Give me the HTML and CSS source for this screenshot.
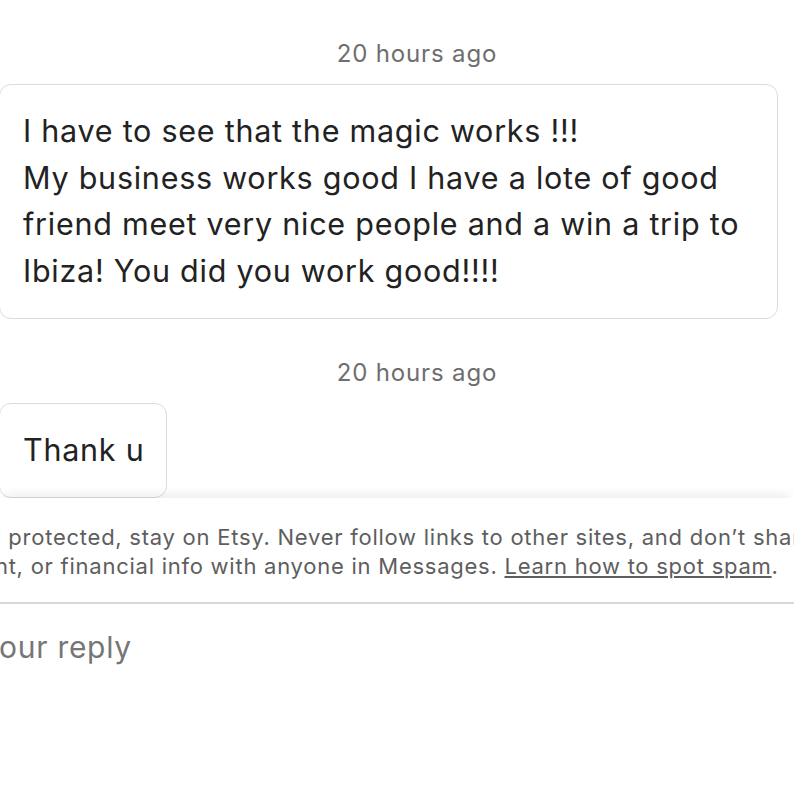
FILE: index.html
```html
<!DOCTYPE html>
<html>
<head>
<meta charset="utf-8">
<link rel="stylesheet" href="styles.css">
</head>
<body>
<div class="thread">
  <div class="stamp">20 hours ago</div>
  <div class="bubble bubble-long">I have to see that the magic works !!!<br>My business works good I have a lote of good<br>friend meet very nice people and a win a trip to<br>Ibiza! You did you work good!!!!</div>
  <div class="stamp">20 hours ago</div>
  <div class="bubble bubble-short">Thank u</div>
</div>
<div class="notice">
  <p>To stay protected, stay on Etsy. Never follow links to other sites, and don’t share personal,<br>payment, or financial info with anyone in Messages. <a href="#">Learn how to spot spam</a>.</p>
</div>
<div class="reply">Type your reply</div>
</body>
</html>
```
FILE: styles.css
```css
html, body {
  margin: 0;
  padding: 0;
  background: #fff;
  overflow: hidden;
  width: 794px;
  height: 794px;
}
body {
  font-family: Inter, "Open Sans", sans-serif;
  color: #222;
}
.thread {
  display: flex;
  flex-direction: column;
  align-items: flex-start;
  padding-top: 38px;
}
.stamp {
  align-self: stretch;
  text-align: center;
  padding-left: 40px;
  font-size: 24px;
  letter-spacing: 0.85px;
  line-height: 32px;
  color: #6e6e6e;
  margin-bottom: 14px;
}
.bubble {
  box-sizing: border-box;
  margin-left: -1px;
  border: 1px solid #dcdcdc;
  border-radius: 12px;
  padding: 23px 22px 23px 23px;
  font-size: 30.5px;
  letter-spacing: 0.75px;
  line-height: 46.5px;
  white-space: nowrap;
}
.bubble-long {
  width: 779px;
  padding-bottom: 24px;
  margin-bottom: 38px;
}
.bubble-short {
  margin-bottom: 0;
}
.notice {
  position: relative;
  background: #fff;
  border-bottom: 2px solid #d8d8d8;
  box-shadow: 0 -8px 10px -4px rgba(0,0,0,0.07);
  padding: 25px 0 21px;
  overflow: hidden;
}
.notice p {
  margin: 0 0 0 -79px;
  width: 1000px;
  white-space: nowrap;
  font-size: 22px;
  letter-spacing: 0.75px;
  line-height: 29px;
  color: #5e5e5e;
}
.notice a {
  color: #5e5e5e;
  text-decoration: underline;
}
.reply {
  margin-left: -100px;
  padding-top: 23px;
  font-size: 30px;
  letter-spacing: 0.7px;
  line-height: 40px;
  color: #767676;
}
```
